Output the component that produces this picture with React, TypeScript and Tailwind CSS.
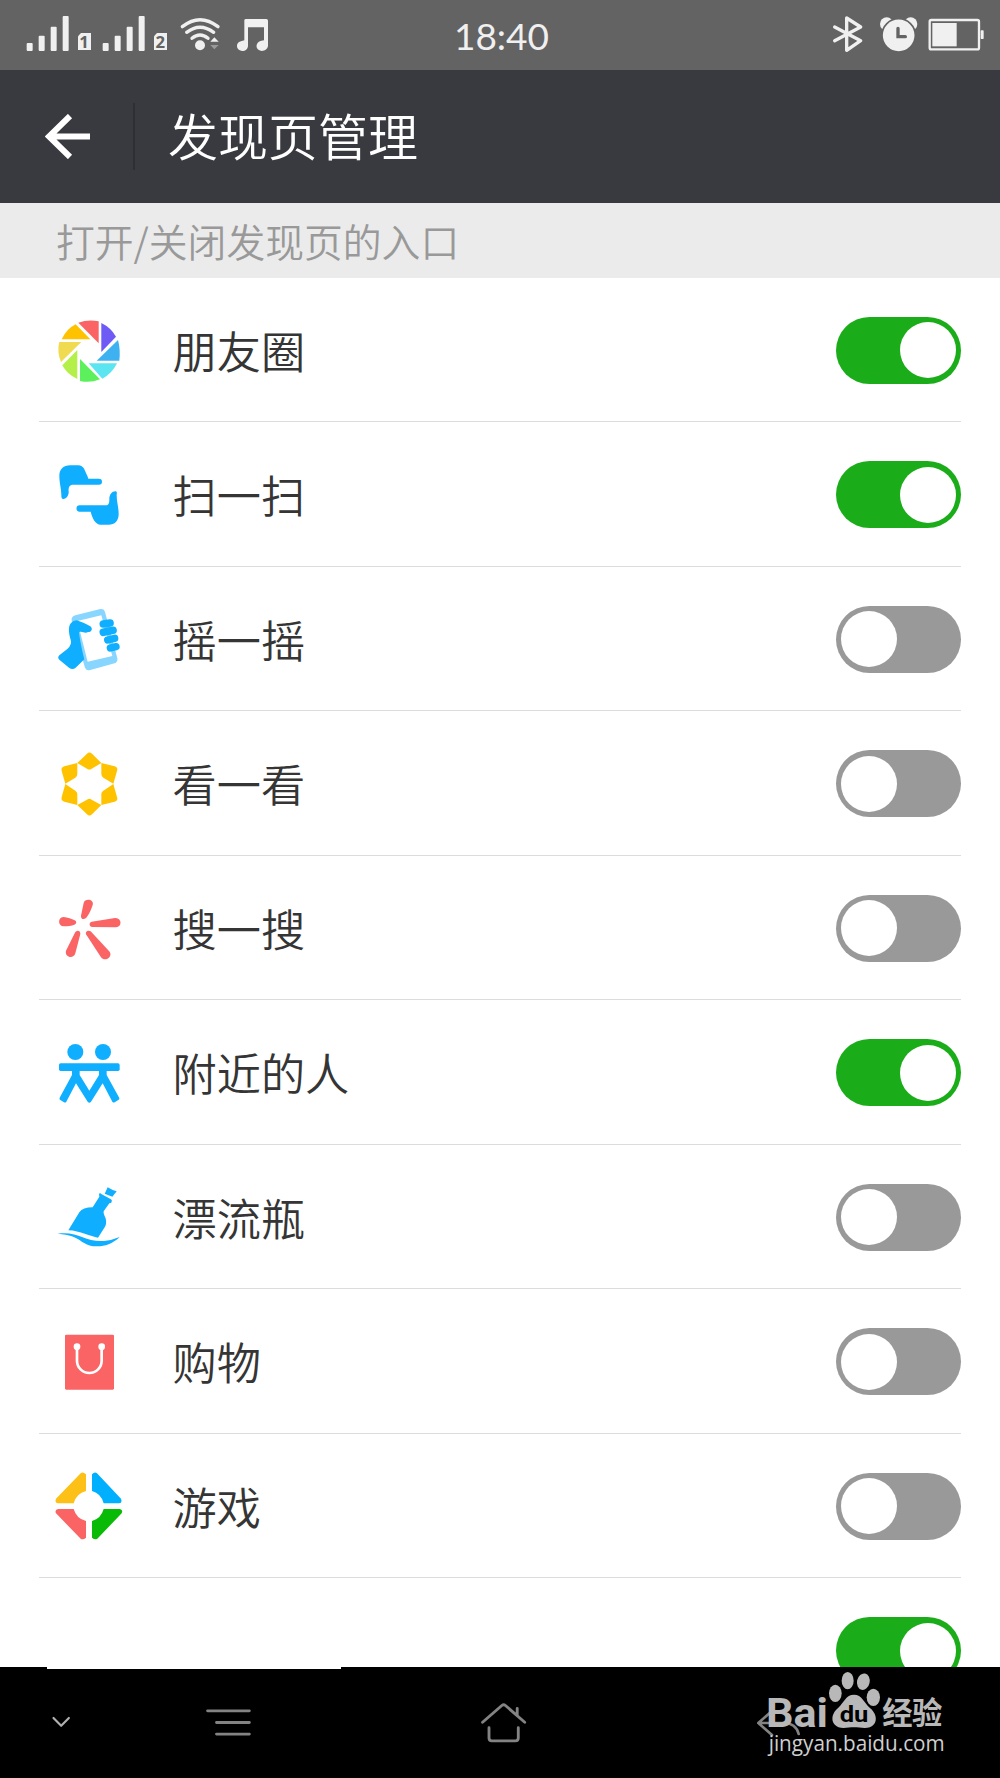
import { useState } from "react"
import type { ReactNode } from "react"
import clsx from "clsx"

const BLUE = "#10aeff"
const RED = "#fa6464"
const YELLOW = "#ffc200"

const icon = "w-[72px] h-[72px] shrink-0"

function MomentsIcon() {
  return (
    <svg viewBox="69 41 216 216" className={icon}>
      <path d="M145 67Q175 56 206 63V129Z" fill={RED} />
      <path d="M214 68Q243 82 258 109L214 155Z" fill="#6e5bf5" />
      <path d="M264 119Q272 149 268 181H200Z" fill="#3eb2f1" />
      <path d="M176 189H261Q246 220 217 235Z" fill="#5be5f0" />
      <path d="M150 176L210 237Q181 249 150 242Z" fill="#5cf15c" />
      <path d="M142 149V236Q112 223 97 195Z" fill="#b4ef4a" />
      <path d="M88 125H154L93 185Q80 154 88 125Z" fill="#efda50" />
      <path d="M95 117Q109 86 137 72L181 117Z" fill={YELLOW} />
    </svg>
  )
}

function ScanIcon() {
  return (
    <svg viewBox="69 475 216 216" className={icon} fill={BLUE}>
      <path d="M88 525C88 505 101 494 120 494H140C156 494 161 500 165 510C169 520 173 526 175 534H207A9 9 0 0 1 207 552H127C118 553 115 561 116 572C117 584 110 594 100 595C95 595 94 591 94 583C94 563 88 548 88 525Z" />
      <path d="M266 640C266 661 254 672 236 672H212C196 672 187 652 182 633H149A9 9 0 0 1 149 614H231C238 610 238 604 238 595C238 582 246 572 256 572C261 572 261 576 260 583C260 604 266 620 266 640Z" />
    </svg>
  )
}

function ShakeIcon() {
  return (
    <svg viewBox="69 38 216 216" className={icon}>
      <path
        d="M136 75L211 56Q222 54 225 65L262 204Q264 215 254 219L181 239Q169 242 165 232L125 91Q123 79 136 75Z"
        fill="#88d6ff"
      />
      <path d="M142 92L214 75L247 197L173 214Z" fill="#fff" />
      <path
        d="M140 90C153 94 168 101 178 106C190 112 187 125 174 125C165 131 155 121 147 126C150 151 157 184 163 207L137 232Q128 240 118 233L88 208Q81 202 88 195L112 176Q127 162 122 148C117 131 113 109 123 98Q130 90 140 90Z"
        fill={BLUE}
      />
      <g stroke={BLUE} strokeLinecap="round">
        <path d="M220 101L240 98" strokeWidth="23" />
        <path d="M220 126L249 120" strokeWidth="23" />
        <path d="M233 149L254 144" strokeWidth="22" />
        <path d="M241 173L258 169" strokeWidth="22" />
      </g>
    </svg>
  )
}

function LookIcon() {
  return (
    <svg viewBox="69 472 216 216" className={icon} fill={YELLOW}>
      <path d="M171 489Q178 482 186 489L214 517L185 534Q178 539 171 534L142 517Z" />
      <path d="M171 671Q178 678 186 671L214 643L185 627Q178 622 171 627L142 643Z" />
      <path d="M142 517V550Q142 557 136 561L106 579L95 541Q92 530 103 527Z" />
      <path d="M214 517V550Q214 557 220 561L250 579L261 541Q265 530 254 527Z" />
      <path d="M142 643V610Q142 604 136 600L106 580L95 619Q92 630 103 633Z" />
      <path d="M214 643V610Q214 604 220 600L250 580L261 619Q265 630 254 633Z" />
    </svg>
  )
}

function SearchIcon() {
  return (
    <svg viewBox="69 35 216 216" className={icon} fill={RED}>
      <path d="M161 68C164 52 194 56 188 74C184 88 174 108 167 114C160 119 152 115 153 106Z" />
      <path d="M100 110C114 111 125 116 134 120C141 124 140 130 133 133C124 136 114 138 101 138C83 138 83 110 100 110Z" />
      <path d="M185 124L255 113C276 111 277 140 258 141L187 140C177 139 176 126 185 124Z" />
      <path d="M134 159C138 147 152 149 151 161L136 219C130 238 103 230 108 211Z" />
      <path d="M170 165C163 155 173 147 182 153L239 214C249 230 225 246 213 231Z" />
    </svg>
  )
}

function NearbyIcon() {
  return (
    <svg viewBox="69 469 216 216" className={icon} fill={BLUE}>
      <circle cx="136" cy="514" r="24" />
      <circle cx="219" cy="514" r="24" />
      <rect x="87" y="548" width="182" height="23" rx="5" />
      <path d="M126 569H149V583L178 630L207 583V569H230V583L268 652Q269 656 265 658L254 665Q250 667 247 663L218 608L183 663Q178 669 173 663L138 608L109 663Q106 667 102 665L91 658Q87 656 89 651L126 583Z" />
    </svg>
  )
}

function BottleIcon() {
  return (
    <svg viewBox="69 32 216 216" className={icon} fill={BLUE}>
      <path d="M233 51Q247 60 260 63L247 79L224 70Z" />
      <path d="M207 70Q211 66 215 72L243 87Q248 90 244 97L238 99L221 123C219 135 231 142 228 160Q227 166 224 171L204 202C182 199 150 181 115 180L148 126Q158 111 188 111L208 79Z" />
      <path d="M83 190C145 181 165 216 222 212Q248 209 269 200C246 222 222 229 198 228C148 225 158 195 83 190Z" />
    </svg>
  )
}

function ShoppingIcon() {
  return (
    <svg viewBox="69 466 216 216" className={icon}>
      <rect x="105" y="492" width="147" height="165" rx="4" fill={RED} />
      <circle cx="141" cy="528" r="10" fill="#fff" />
      <circle cx="215" cy="528" r="10" fill="#fff" />
      <path d="M141 530V570A37 37 0 0 0 215 570V530" fill="none" stroke="#fff" strokeWidth="8" />
    </svg>
  )
}

function GamesIcon() {
  return (
    <svg viewBox="69 59 216 216" className={icon}>
      <path d="M152 69Q159 63 168 72V122Q139 129 131 159H85Q73 157 78 145Z" fill="#fcc016" />
      <path d="M201 69Q194 63 186 72V122Q213 129 221 159H267Q278 157 273 145Z" fill="#00b0ff" />
      <path d="M152 265Q159 270 168 262V212Q139 205 131 176H85Q73 178 78 189Z" fill={RED} />
      <path d="M202 265Q195 270 186 262V212Q213 205 221 176H269Q280 178 275 189Z" fill="#09bb07" />
    </svg>
  )
}

type Entry = { label: string; icon: ReactNode; on: boolean }

const entries: Entry[] = [
  { label: "朋友圈", icon: <MomentsIcon />, on: true },
  { label: "扫一扫", icon: <ScanIcon />, on: true },
  { label: "摇一摇", icon: <ShakeIcon />, on: false },
  { label: "看一看", icon: <LookIcon />, on: false },
  { label: "搜一搜", icon: <SearchIcon />, on: false },
  { label: "附近的人", icon: <NearbyIcon />, on: true },
  { label: "漂流瓶", icon: <BottleIcon />, on: false },
  { label: "购物", icon: <ShoppingIcon />, on: false },
  { label: "游戏", icon: <GamesIcon />, on: false },
  { label: "", icon: <div className={icon} />, on: true },
]

function Toggle({ on, onClick }: { on: boolean; onClick: () => void }) {
  return (
    <button
      role="switch"
      aria-checked={on}
      onClick={onClick}
      className={clsx(
        "flex items-center w-[125px] h-[67px] px-[5px] rounded-full shrink-0",
        on ? "justify-end bg-[#1aad19]" : "justify-start bg-[#999999]"
      )}
    >
      <span className="w-14 h-14 rounded-full bg-white" />
    </button>
  )
}

function StatusBar() {
  return (
    <div className="h-[69.5px] shrink-0 bg-[#636363] flex items-center justify-between pl-5 pr-[10px]">
      <svg viewBox="60 0 780 210" className="w-[260px] h-[70px]" fill="#f0f0f0">
        <rect x="80" y="129" width="18" height="24" rx="3" />
        <rect x="116" y="107" width="18" height="46" rx="3" />
        <rect x="152" y="80" width="18" height="73" rx="3" />
        <rect x="188" y="48" width="18" height="105" rx="3" />
        <path d="M243 99H273V150H234V109Z" />
        <text x="252" y="144" fontSize="50" textAnchor="middle" className="font-['Open_Sans'] font-bold" fill="#636363">1</text>
        <rect x="308" y="129" width="18" height="24" rx="3" />
        <rect x="344" y="107" width="18" height="46" rx="3" />
        <rect x="380" y="80" width="18" height="73" rx="3" />
        <rect x="416" y="48" width="18" height="105" rx="3" />
        <path d="M471 99H501V150H462V109Z" />
        <text x="481" y="144" fontSize="50" textAnchor="middle" className="font-['Open_Sans'] font-bold" fill="#636363">2</text>
        <g fill="none" stroke="#f0f0f0" strokeWidth="10" strokeLinecap="round">
          <path d="M547 80Q600 38 654 80" />
          <path d="M560 97Q600 66 641 97" />
          <path d="M576 115Q600 95 624 115" />
        </g>
        <circle cx="600" cy="136" r="15" />
        <path d="M631 125L643 112L656 125Z" />
        <path d="M631 135H656L643 148Z" fill="#999" />
        <path d="M733 61Q733 57 738 57H799Q804 57 804 62V136C804 146 796 153 785 153C764 151 765 126 784 122L792 121V82H744V137C744 146 737 153 726 153C706 151 706 126 725 123L733 121Z" />
      </svg>
      <div className="font-['Lato'] font-normal text-[37px] leading-none text-[#f0f0f0] mr-[97px] mt-[2px]">18:40</div>
      <svg viewBox="60 0 510 210" className="w-[170px] h-[70px]" fill="#f0f0f0">
        <path
          d="M104 81L182 122L140 151V54L182 81L104 122"
          fill="none"
          stroke="#f0f0f0"
          strokeWidth="10"
          strokeLinecap="round"
          strokeLinejoin="round"
        />
        <circle cx="260" cy="72" r="20" />
        <circle cx="332" cy="72" r="20" />
        <circle cx="296" cy="106" r="50" stroke="#636363" strokeWidth="5" />
        <path d="M294 85V110H316" fill="none" stroke="#636363" strokeWidth="10" strokeLinecap="round" />
        <rect x="389" y="60" width="148" height="88" rx="5" fill="none" stroke="#f0f0f0" strokeWidth="7" />
        <rect x="397" y="69" width="73" height="70" />
        <rect x="542" y="91" width="9" height="26" rx="2" />
      </svg>
    </div>
  )
}

function Watermark() {
  return (
    <svg viewBox="0 201 660 300" className="absolute left-[740px] top-0 w-[220px] h-[100px]" fill="#b8b8b8">
      <text x="78" y="380" fontSize="121" textLength="186" lengthAdjust="spacingAndGlyphs" className="font-['Roboto'] font-bold">
        Bai
      </text>
      <ellipse cx="286" cy="280" rx="19" ry="26" />
      <ellipse cx="323" cy="242" rx="18" ry="26" />
      <ellipse cx="370" cy="245" rx="19" ry="25" transform="rotate(12 370 245)" />
      <ellipse cx="400" cy="292" rx="20" ry="26" />
      <path d="M342 284C366 284 372 308 389 323C407 337 413 359 402 373C389 390 363 382 342 382C321 382 297 390 283 373C271 357 279 335 295 323C312 308 317 284 342 284Z" />
      <text x="299" y="367" fontSize="67" textLength="86" lengthAdjust="spacingAndGlyphs" fill="#000" className="font-['Roboto'] font-bold">
        du
      </text>
      <text x="427" y="371" fontSize="91" textLength="180" className="font-['Noto_Sans_CJK_SC'] font-bold">
        经验
      </text>
      <text x="86" y="452" fontSize="63" textLength="528" lengthAdjust="spacingAndGlyphs" className="font-['Open_Sans'] font-medium" fill="#cfcfcf">
        jingyan.baidu.com
      </text>
    </svg>
  )
}

function NavBar() {
  const item = "w-[60px] h-[60px] shrink-0"
  const stroke = {
    fill: "none",
    stroke: "#838383",
    strokeWidth: 8,
    strokeLinecap: "round" as const,
    strokeLinejoin: "round" as const,
  }

  return (
    <nav className="relative h-[111px] shrink-0 bg-black flex items-center pl-[31px]">
      <span className="absolute left-[47px] top-0 w-[294px] h-[2px] bg-white" />
      <svg viewBox="88 119 168 168" className={item} {...stroke} stroke="#b0b0b0" strokeWidth="6">
        <path d="M151 189L172.5 211L194 189" />
      </svg>
      <svg viewBox="557 119 168 168" className={clsx(item, "ml-[108px]")} {...stroke}>
        <path d="M581 169H698M606 201.5H698M606 234H698" />
      </svg>
      <svg viewBox="1327 119 168 168" className={clsx(item, "ml-[215px]")} {...stroke}>
        <path d="M1351 201L1405 154Q1410 150 1415 154L1469 201M1448 162V181" />
        <path d="M1369 216V245Q1369 253 1377 253H1443Q1451 253 1451 245V216" />
      </svg>
      <svg viewBox="30 277 180 180" className={clsx(item, "ml-[216px]")} {...stroke}>
        <path d="M96 331L55 367L96 403M55 367H130Q168 367 176 400" />
      </svg>
      <Watermark />
    </nav>
  )
}

export default function App() {
  const [states, setStates] = useState(entries.map((e) => e.on))

  const toggle = (index: number) => setStates(states.map((s, i) => (i === index ? !s : s)))

  return (
    <div className="w-[1000px] h-[1778px] flex flex-col overflow-hidden bg-white font-['Noto_Sans_CJK_SC',sans-serif] font-[350]">
      <StatusBar />

      {/* Title bar */}
      <header className="h-[133.5px] shrink-0 bg-[#393a3f] flex items-center pl-[45px]">
        <svg viewBox="0 0 45 45" className="w-[45px] h-[45px]" fill="none" stroke="#fff" strokeWidth="6">
          <path d="M45 22.5H4M25 2L4 22.5L25 43" />
        </svg>
        <div className="w-[2px] h-[67px] bg-[#2e2f33] ml-[43px]" />
        <h1 className="ml-[33px] mb-1 text-[50px] leading-none font-[350] text-white">发现页管理</h1>
      </header>

      <div className="h-[74.5px] shrink-0 bg-[#ebebeb] flex items-center pl-14 text-[38.8px] leading-none text-[#999999]">
        打开/关闭发现页的入口
      </div>

      {/* Entries */}
      <main className="flex-1 min-h-0 overflow-hidden px-[39px]">
        {entries.map((entry, i) => (
          <div key={i} className="h-[144.5px] flex items-center pt-[1.5px] pl-[14px] border-b border-[#dcdcdc]">
            {entry.icon}
            <span className="flex-1 ml-[47.5px] text-[44.2px] leading-none text-[#353535]">{entry.label}</span>
            <Toggle on={states[i]} onClick={() => toggle(i)} />
          </div>
        ))}
      </main>

      <NavBar />
    </div>
  )
}
